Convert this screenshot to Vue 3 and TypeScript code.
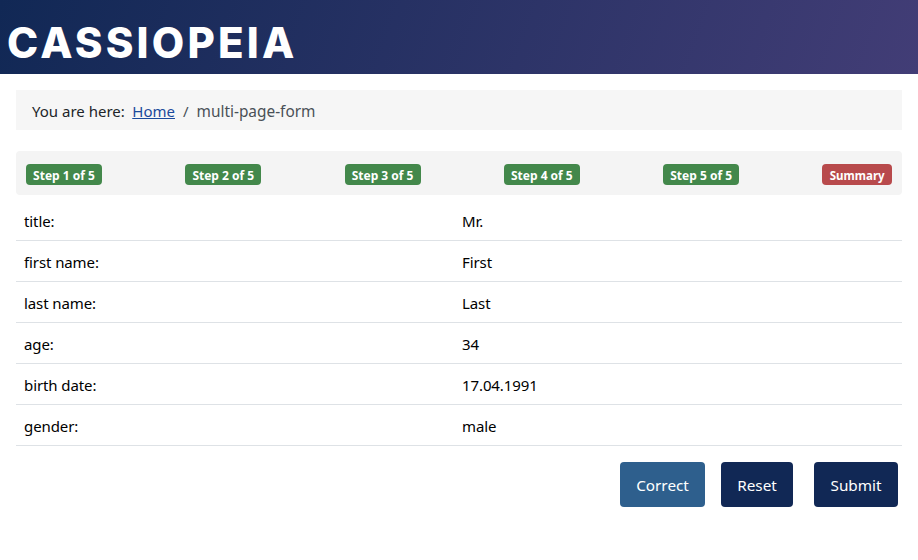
<script setup lang="ts">
const steps: string[] = ['Step 1 of 5', 'Step 2 of 5', 'Step 3 of 5', 'Step 4 of 5', 'Step 5 of 5']
const rows: [string, string][] = [
  ['title:', 'Mr.'],
  ['first name:', 'First'],
  ['last name:', 'Last'],
  ['age:', '34'],
  ['birth date:', '17.04.1991'],
  ['gender:', 'male'],
]
</script>

<template>
  <div class="page">
    <header class="header"><div class="logo">CASSIOPEIA</div></header>
    <main class="main">
      <nav class="crumbs">
        <span class="here">You are here:</span>
        <a class="home" href="#">Home</a>
        <span class="sep">/</span>
        <span class="current">multi-page-form</span>
      </nav>
      <div class="steps">
        <span v-for="s in steps" :key="s" class="badge">{{ s }}</span>
        <span class="badge danger">Summary</span>
      </div>
      <div class="table">
        <div v-for="r in rows" :key="r[0]" class="row">
          <div class="cell">{{ r[0] }}</div>
          <div class="cell">{{ r[1] }}</div>
        </div>
      </div>
      <div class="actions">
        <button class="btn alt correct">Correct</button>
        <button class="btn reset">Reset</button>
        <button class="btn submit">Submit</button>
      </div>
    </main>
  </div>
</template>

<style>
html, body { margin: 0; background: #fff; }
</style>

<style scoped>
.page {
  font-family: "Noto Sans", "Open Sans", sans-serif;
  font-size: 15px;
  color: #000;
}
.header {
  height: 74px;
  box-sizing: border-box;
  padding: 20px 0 0 7px;
  background: linear-gradient(110deg, #112855 0%, #423d76 100%);
}
.logo {
  font-family: "Inter", sans-serif;
  font-weight: 800;
  font-size: 42px;
  line-height: 46px;
  letter-spacing: 3.2px;
  color: #fff;
}
.main { padding: 16px 16px 0; }
.crumbs {
  height: 40px;
  box-sizing: border-box;
  padding: 2px 16px 0;
  display: flex;
  align-items: center;
  background: #f6f6f6;
  color: #212529;
}
.home { margin-left: 7.5px; color: #1b4a9c; }
.sep { margin: 0 8px; color: #495057; }
.current { color: #495057; font-size: 15.4px; }
.steps {
  margin-top: 21px;
  height: 44px;
  box-sizing: border-box;
  padding: 13px 10px 10px;
  display: flex;
  justify-content: space-between;
  align-items: flex-start;
  background: #f4f4f4;
  border-radius: 4px;
}
.badge {
  width: 76px;
  height: 21px;
  box-sizing: border-box;
  padding-top: 1px;
  display: flex;
  align-items: center;
  justify-content: center;
  border-radius: 4px;
  background: #43884b;
  color: #fff;
  font-size: 12px;
  font-weight: 700;
  white-space: nowrap;
}
.danger { width: 69.6px; background: #b84a4c; font-size: 11.5px; }
.table { margin-top: 5px; }
.row {
  display: grid;
  grid-template-columns: 438px 1fr;
  height: 41px;
  box-sizing: border-box;
  padding-top: 2px;
  border-bottom: 1px solid #dee2e6;
  align-items: center;
  letter-spacing: -0.1px;
}
.cell { padding-left: 8px; }
.actions {
  display: flex;
  justify-content: flex-end;
  margin-top: 16px;
  padding-right: 4px;
}
.btn {
  height: 45px;
  padding: 0;
  border: 0;
  border-radius: 4px;
  background: #112855;
  color: #fff;
  font: inherit;
  font-size: 15.3px;
}
.alt { background: #2e5f8d; }
.correct { width: 85px; }
.reset { width: 72px; margin-left: 16px; }
.submit { width: 84px; margin-left: 21px; }
</style>
